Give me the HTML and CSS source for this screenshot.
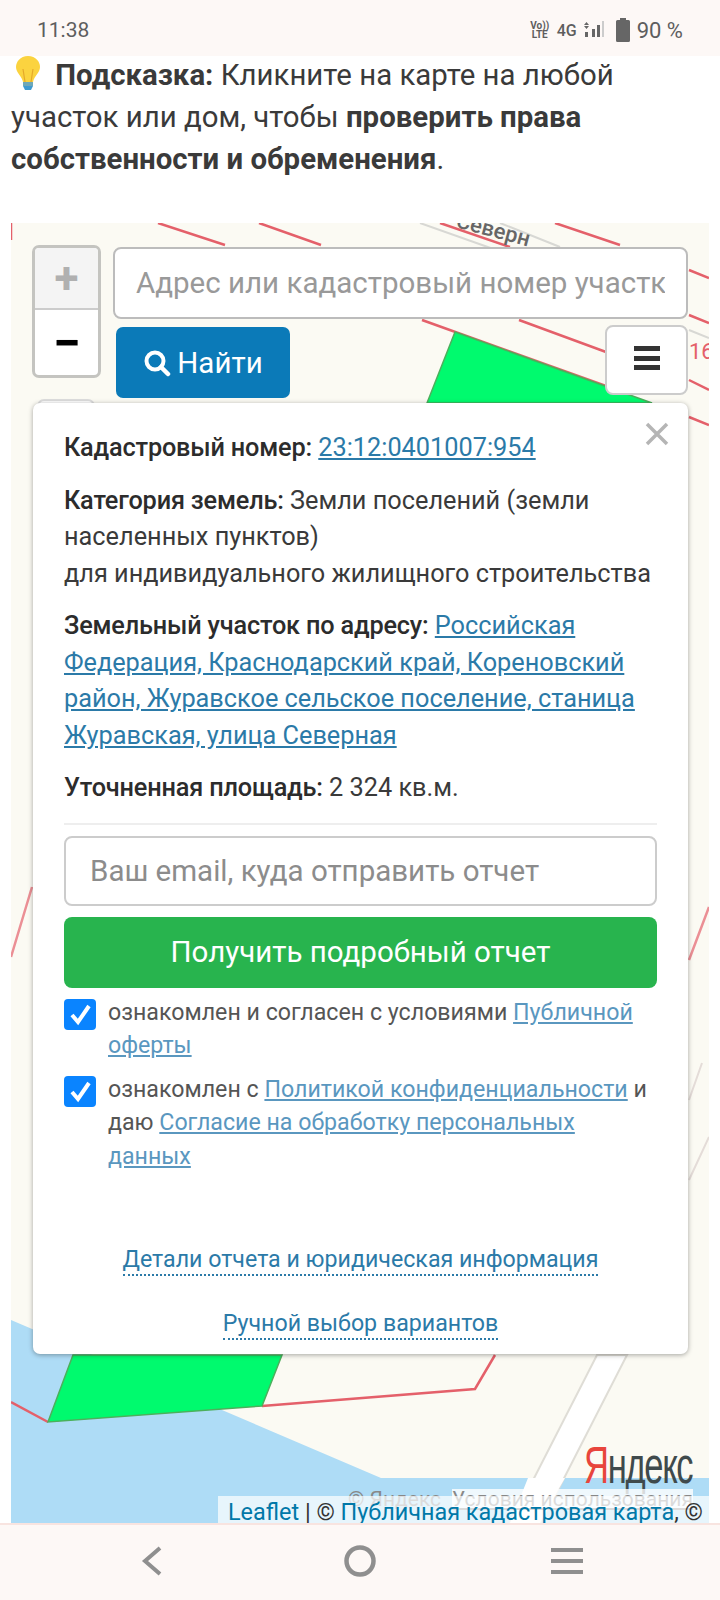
FILE: index.html
```html
<!DOCTYPE html>
<html lang="ru">
<head>
  <meta charset="UTF-8" />
  <meta name="viewport" content="width=device-width, initial-scale=1.0" />
  <title>Проверка участка</title>
  <link rel="stylesheet" href="styles.css">
</head>
<body>
  <header class="status-bar">
    <span class="clock">11:38</span>
    <div class="status-icons">
      <span class="volte">Vo))<br>LTE</span>
      <span class="net">4G</span>
      <svg class="signal" width="21" height="18" viewBox="0 0 21 18">
        <path d="M3.500 1 L6 4 H1 Z M3.500 8 L1 5 H6 Z" fill="#666"/>
        <rect x="2" y="11" width="3" height="5" fill="#666"/>
        <rect x="9" y="8" width="3" height="8" fill="#666"/>
        <rect x="14" y="4" width="3" height="12" fill="#666"/>
        <rect x="19" y="0" width="2" height="16" fill="#ccc"/>
      </svg>
      <svg class="battery" width="14" height="24" viewBox="0 0 14 24">
        <path d="M4 0 H10 V2 H12.500 Q14 2 14 3.500 V22.500 Q14 24 12.500 24 H1.500 Q0 24 0 22.500 V3.500 Q0 2 1.500 2 H4 Z" fill="#666"/>
      </svg>
      <span class="percent">90 %</span>
    </div>
  </header>

  <main class="page">
    <p class="hint">
      <svg class="bulb" width="28" height="36" viewBox="0 0 28 36">
        <path d="M14 1 C6 1 2 7 2 12 C2 18 8 21 9 27 H19 C20 21 26 18 26 12 C26 7 22 1 14 1 Z" fill="#fbd33f"/>
        <path d="M11 27 L9 14 M17 27 L19 14" stroke="#e5a92a" stroke-width="1.200" fill="none"/>
        <rect x="9" y="27" width="10" height="4" fill="#6fa8b8"/>
        <path d="M9 31 H19 L17 35 H11 Z" fill="#3f9ad0"/>
      </svg>
      <strong>Подсказка:</strong> Кликните на карте на любой участок или дом, чтобы <strong>проверить права собственности и обременения</strong>.
    </p>

    <section class="map">
      <svg class="map-tiles" width="698" height="1300" viewBox="11 223 698 1300">
        <path d="M11 1320 L381 1478 L709 1478 V1523 H11 Z" fill="#aedcf6"/>
        <path d="M597 1355 L528 1490 L510 1523 H540 L558 1490 L627 1355 Z" fill="#fff" stroke="#dfddd6" stroke-width="2"/>
        <path d="M528 1478 H565 L558 1490 L540 1523 H510 Z" fill="#fff"/>

        <g stroke="#e4606a" stroke-width="2.500" fill="none">
          <path d="M158 223 L225 245 M259 223 L321 245 M555 223 L620 245 M440 223 L510 247"/>
          <path d="M11 223 L11 240 M218 358 L216 367 M192 465 L190 472"/>
          <path d="M422 320 L606 386 M519 320 L606 352"/>
          <path d="M689 270 L709 278 M689 315 L709 323 M689 380 L709 390 M689 417 L709 425"/>
          <path d="M262 1406 L475 1389 L495 1355 M11 1402 L48 1422"/>
        </g>
        <path d="M32 887 L11 957 M709 907 L689 960" stroke="#eb8f95" stroke-width="2.500" fill="none"/>
        <path d="M702 1063 L689 1100 M709 1137 L689 1180" stroke="#e4dcd8" stroke-width="2" fill="none"/>
        <path d="M420 223 L530 262 M500 223 L560 247 M689 330 L709 338" stroke="#d8d8d4" stroke-width="2" fill="none"/>

        <path d="M455 332 L652 403 H427 Z" fill="#00fa6e" stroke="#4caf5c" stroke-width="1.500"/>
        <path d="M73 1355 H282 L262 1406 L48 1422 Z" fill="#00fa6e" stroke="#4caf5c" stroke-width="1.500"/>

        <text class="street-name" x="455" y="227" transform="rotate(15 455 227)">Северн</text>
        <text class="plot-number" x="689" y="359">168</text>
      </svg>

      <div class="zoom-control">
        <a class="zoom-in">+</a>
        <a class="zoom-out">−</a>
      </div>
      <div class="layers-stub"></div>
      <div class="search">
        <input class="search-input" type="text" placeholder="Адрес или кадастровый номер участка">
        <div class="search-row">
          <button class="search-btn">
            <svg width="28" height="28" viewBox="0 0 28 28">
              <circle cx="12" cy="12" r="8.500" fill="none" stroke="#fff" stroke-width="4"/>
              <path d="M18 18 L25 25" stroke="#fff" stroke-width="4.500" stroke-linecap="round"/>
            </svg>
            Найти
          </button>
          <button class="menu-btn"><span></span><span></span><span></span></button>
        </div>
      </div>

      <div class="popup">
        <svg class="popup-close" width="24" height="24" viewBox="0 0 24 24">
          <path d="M2 2 L22 22 M22 2 L2 22" stroke="#b5b5b5" stroke-width="3.500"/>
        </svg>
        <p><b>Кадастровый номер:</b> <a href="#">23:12:0401007:954</a></p>
        <p><b>Категория земель:</b> Земли поселений (земли населенных пунктов)<br>для индивидуального жилищного строительства</p>
        <p><b>Земельный участок по адресу:</b> <a href="#">Российская Федерация, Краснодарский край, Кореновский район, Журавское сельское поселение, станица Журавская, улица Северная</a></p>
        <p><b>Уточненная площадь:</b> 2 324 кв.м.</p>
        <hr class="divider">
        <input class="email" type="text" placeholder="Ваш email, куда отправить отчет">
        <button class="report-btn">Получить подробный отчет</button>
        <div class="agree">
          <span class="check"><svg width="23" height="23" viewBox="0 0 23 23"><path d="M3 12 L9 19 L20 3" fill="none" stroke="#fff" stroke-width="4"/></svg></span>
          <div>ознакомлен и согласен с условиями <a href="#">Публичной оферты</a></div>
        </div>
        <div class="agree">
          <span class="check"><svg width="23" height="23" viewBox="0 0 23 23"><path d="M3 12 L9 19 L20 3" fill="none" stroke="#fff" stroke-width="4"/></svg></span>
          <div>ознакомлен с <a href="#">Политикой конфиденциальности</a> и даю <a href="#">Согласие на обработку персональных данных</a></div>
        </div>
        <div class="popup-links">
          <a href="#">Детали отчета и юридическая информация</a>
          <a href="#">Ручной выбор вариантов</a>
        </div>
      </div>

      <div class="yandex-logo"><span>Я</span>ндекс</div>
      <div class="yandex-terms"><span class="yandex-copy">© Яндекс</span><span class="yandex-link">Условия использования</span></div>
      <div class="attribution"><a href="#">Leaflet</a> | © <a href="#">Публичная кадастровая карта</a>, ©</div>
    </section>
  </main>

  <nav class="nav-bar">
    <svg width="24" height="30" viewBox="0 0 24 30"><path d="M20 2 L5 15 L20 28" fill="none" stroke="#8f8f8f" stroke-width="4"/></svg>
    <svg class="nav-home" width="32" height="32" viewBox="0 0 32 32"><circle cx="16" cy="16" r="13.500" fill="none" stroke="#8f8f8f" stroke-width="4.500"/></svg>
    <svg width="32" height="26" viewBox="0 0 32 26"><path d="M0 2 H32 M0 13 H32 M0 24 H32" stroke="#8f8f8f" stroke-width="4"/></svg>
  </nav>
</body>
</html>
```

FILE: styles.css
```css
* { box-sizing: border-box; }

body {
  margin: 0;
  width: 720px;
  height: 1600px;
  overflow: hidden;
  display: flex;
  flex-direction: column;
  font-family: Roboto, sans-serif;
  background: #fff;
  color: #333;
}

a { color: #2b7aa8; }

/* status bar */
.status-bar {
  height: 56px;
  flex: none;
  display: flex;
  justify-content: space-between;
  align-items: center;
  padding: 4px 37px 0;
  background: #fdf8f6;
  color: #5e5e5e;
  font-size: 21px;
  position: relative;
  z-index: 1;
}

.status-icons {
  display: flex;
  align-items: center;
}

.volte {
  width: 22px;
  margin-right: 6px;
  font-size: 10px;
  line-height: 9px;
  font-weight: 700;
  text-align: center;
}

.net {
  font-size: 16px;
  font-weight: 500;
  margin-right: 6px;
}

.signal { margin-right: 12px; }
.battery { margin-right: 7px; }
.percent { font-size: 22px; }

/* page */
.page {
  flex: 1;
  min-height: 0;
  overflow: hidden;
}

.hint {
  margin: -2px 0 43px;
  padding: 0 11px;
  font-size: 29.400px;
  line-height: 42px;
  color: #3a3a3a;
}

.bulb {
  vertical-align: -6px;
  margin: 0 6px 0 3px;
}

/* map */
.map {
  position: relative;
  margin: 0 11px;
  height: 1300px;
  overflow: hidden;
  background: #fbfaf3;
}

.map-tiles {
  position: absolute;
  left: 0;
  top: 0;
}

.street-name {
  font: 500 22px Roboto, sans-serif;
  fill: #666;
}

.plot-number {
  font: 22px Roboto, sans-serif;
  fill: #e4606a;
}

.zoom-control {
  position: absolute;
  left: 21px;
  top: 22px;
  width: 69px;
  height: 133px;
  display: flex;
  flex-direction: column;
  border: 3px solid #c4c4c0;
  border-radius: 7px;
  background: #fff;
  overflow: hidden;
}

.zoom-control a {
  display: flex;
  align-items: center;
  justify-content: center;
  font-weight: 700;
  color: #000;
}

.zoom-in {
  height: 62px;
  font-size: 44px;
  background: #f4f4f4;
  border-bottom: 2px solid #ccc;
  color: #b0b0b0 !important;
}

.zoom-out {
  flex: 1;
  font-size: 50px;
}

.layers-stub {
  position: absolute;
  left: 26px;
  top: 176px;
  width: 58px;
  height: 40px;
  background: #fff;
  border: 2px solid #ddd;
  border-radius: 7px;
}

.search {
  position: absolute;
  left: 102px;
  top: 24px;
  width: 575px;
}

.search-input {
  display: block;
  width: 100%;
  height: 72px;
  padding: 0 21px;
  border: 2px solid #bcbcbc;
  border-radius: 8px;
  background: #fff;
  font: 29.500px Roboto, sans-serif;
}

.search-input::placeholder { color: #999; opacity: 1; }

.search-row {
  display: flex;
  justify-content: space-between;
  align-items: flex-start;
  padding-left: 3px;
  margin-top: 6px;
}

.search-btn {
  width: 174px;
  height: 71px;
  margin-top: 2px;
  display: flex;
  align-items: center;
  justify-content: center;
  gap: 6px;
  border: none;
  border-radius: 7px;
  background: #0b7ab8;
  color: #fff;
  font: 29.500px Roboto, sans-serif;
}

.menu-btn {
  width: 83px;
  height: 70px;
  display: flex;
  flex-direction: column;
  align-items: center;
  justify-content: center;
  gap: 4.500px;
  padding: 0 0 4px;
  border: 2px solid #ccc;
  border-radius: 8px;
  background: #fff;
}

.menu-btn span {
  width: 26px;
  height: 5px;
  background: #333;
}

/* popup */
.popup {
  position: absolute;
  left: 22px;
  top: 180px;
  width: 655px;
  height: 951px;
  padding: 27px 31px 0;
  background: #fff;
  border-radius: 7px;
  box-shadow: 0 1px 5px rgba(0, 0, 0, 0.35);
  font-size: 25.300px;
  line-height: 36.500px;
  color: #3a3a3a;
}

.popup p { margin: 0 0 16px; }

.popup b {
  color: #2c2c2c;
  font-weight: 500;
  letter-spacing: -0.180px;
}

.popup-close {
  position: absolute;
  right: 19px;
  top: 19px;
}

.divider {
  margin: 16px 0 11px;
  border: none;
  border-top: 2px solid #eee;
}

.email {
  display: block;
  width: 100%;
  height: 70px;
  padding: 0 24px;
  border: 2px solid #ccc;
  border-radius: 8px;
  font: 29.500px Roboto, sans-serif;
}

.email::placeholder { color: #8c8c8c; opacity: 1; }

.report-btn {
  display: block;
  width: 100%;
  height: 71px;
  margin: 11px 0 8px;
  border: none;
  border-radius: 8px;
  background: #28b44e;
  color: #fff;
  font: 29.500px Roboto, sans-serif;
}

.agree {
  display: flex;
  gap: 12px;
  margin-bottom: 10px;
  font-size: 23.200px;
  line-height: 33.500px;
  color: #555;
}

.agree a { color: #5a97bf; }

.check {
  flex: none;
  width: 32px;
  height: 31px;
  margin-top: 3px;
  display: flex;
  align-items: center;
  justify-content: center;
  border-radius: 4px;
  background: #0a84ff;
}

.popup-links {
  display: flex;
  flex-direction: column;
  align-items: center;
  gap: 32px;
  margin-top: 71px;
  font-size: 23.200px;
}

.popup-links a {
  text-decoration: none;
  border-bottom: 2px dotted #2b7aa8;
  line-height: 30px;
}

/* map footer */
.yandex-logo {
  position: absolute;
  left: 573px;
  top: 1212px;
  font: 52px "Liberation Sans", sans-serif;
  letter-spacing: -2px;
  transform: scaleX(0.665);
  transform-origin: left top;
  color: #3f4a4c;
}

.yandex-logo span { color: #e8453c; }

.yandex-terms {
  position: absolute;
  right: 16px;
  top: 1266px;
  display: flex;
  gap: 11px;
  font-size: 21px;
  line-height: 21px;
  color: #888;
}

.yandex-link {
  background: rgba(255, 255, 255, 0.8);
  text-decoration: underline;
}

.attribution {
  position: absolute;
  right: 0;
  bottom: 0;
  width: 491px;
  height: 27px;
  padding-left: 10px;
  overflow: hidden;
  white-space: nowrap;
  background: rgba(255, 255, 255, 0.7);
  font-size: 23.400px;
  line-height: 32px;
  color: #333;
}

.attribution a { color: #0078a8; text-decoration: none; }

/* nav bar */
.nav-bar {
  height: 77px;
  flex: none;
  display: flex;
  justify-content: space-between;
  align-items: center;
  padding: 0 137px 4px 140px;
  background: #fdf8f6;
  border-top: 2px solid #f8e4e0;
}

.nav-home { margin-left: 4px; }
```
